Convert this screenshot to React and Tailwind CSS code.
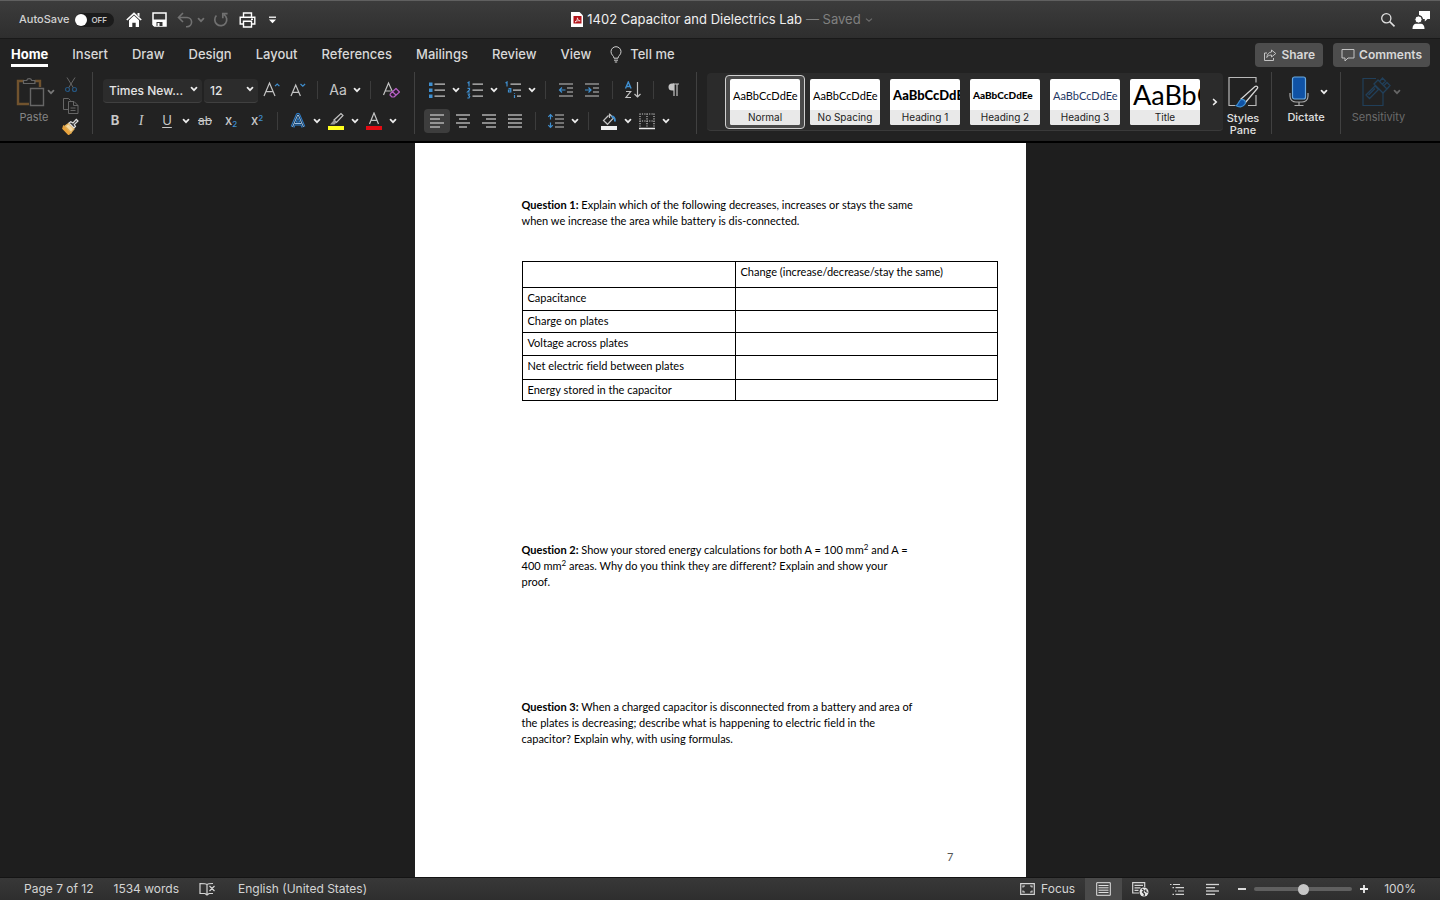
import React, { useState } from 'react';

const tabs = ['Home', 'Insert', 'Draw', 'Design', 'Layout', 'References', 'Mailings', 'Review', 'View'];

const styles = [
  { name: 'Normal', sample: 'AaBbCcDdEe', look: 'pt-0.5 text-[11px] text-black' },
  { name: 'No Spacing', sample: 'AaBbCcDdEe', look: 'pt-0.5 text-[11px] text-black' },
  { name: 'Heading 1', sample: 'AaBbCcDdE', look: 'pt-0.5 text-[13px] font-black text-black' },
  { name: 'Heading 2', sample: 'AaBbCcDdEe', look: 'pt-0.5 text-[10px] font-black text-black' },
  { name: 'Heading 3', sample: 'AaBbCcDdEe', look: 'pt-0.5 text-[11px] text-[#1f3864]' },
  { name: 'Title', sample: 'AaBbC', look: 'text-[27px] text-black' },
];

const rows = [
  { label: 'Capacitance', height: 'h-[23px]' },
  { label: 'Charge on plates', height: 'h-[22px]' },
  { label: 'Voltage across plates', height: 'h-[23px]' },
  { label: 'Net electric field between plates', height: 'h-6' },
  { label: 'Energy stored in the capacitor', height: 'h-[21px]' },
];

const Svg = ({ w = 20, h = 20, children, className = '' }) => (
  <svg width={w} height={h} viewBox={`0 0 ${w} ${h}`} fill="none" stroke="#c4c4c4" strokeWidth="1.2" className={`shrink-0 ${className}`} aria-hidden="true">
    {children}
  </svg>
);

const Chevron = ({ color = '#ececec', className = '' }) => (
  <Svg w={8} h={8} className={className}>
    <path d="M1.5 2.6 4 5.2 6.5 2.6" stroke={color} strokeWidth="1.7" strokeLinecap="round" />
  </Svg>
);

const Tool = ({ label, active, children }) => (
  <button aria-label={label} className={`flex h-6 w-[26px] items-center justify-center ${active ? 'rounded bg-[#3d3d3d]' : ''}`}>
    {children}
  </button>
);

const More = ({ label }) => (
  <button aria-label={`${label} options`} className="flex h-6 w-3 items-center justify-center">
    <Chevron />
  </button>
);

const Sep = () => (
  <div className="flex w-[15px] justify-center">
    <div className="h-[18px] w-px bg-[#3c3c3c]" />
  </div>
);

const Divider = () => <div className="mt-0.5 h-[62px] w-px shrink-0 bg-[#414141]" />;

const Lines = ({ items, w = 16, h = 16, color = '#c4c4c4' }) => (
  <Svg w={w} h={h}>
    {items.map(([x1, x2, y]) => (
      <path key={`${x1}-${y}`} d={`M${x1} ${y}H${x2}`} stroke={color} strokeWidth="1.3" />
    ))}
  </Svg>
);

const TitleBar = () => {
  const [autoSave, setAutoSave] = useState(false);

  return (
    <header className="grid h-[39px] shrink-0 grid-cols-[1fr_auto_1fr] items-center border-t border-b border-t-[#606060] border-b-[#191919] bg-linear-to-b from-[#3c3c3c] to-[#2e2e2e]">
      <div className="flex items-center pl-[19px]">
        <label className="flex items-center gap-1.5 text-[11px] font-medium text-[#d2d2d2]">
          AutoSave
          <input type="checkbox" className="sr-only" checked={autoSave} onChange={(e) => setAutoSave(e.target.checked)} />
          <span className="flex h-3.5 w-[39px] items-center rounded-full bg-[#1b1b1b] text-[8px] font-semibold text-[#c8c8c8]">
            <span className="mr-1 size-3 rounded-full bg-white" />
            OFF
          </span>
        </label>
        <div className="ml-3 flex items-center">
          <button aria-label="Home" className="mr-2.5">
            <Svg w={16} h={16}>
              <path d="M.8 8 8 1.3 15.2 8" stroke="#fff" strokeWidth="1.7" />
              <path d="M11.5 1h2v4l-2-2Z" fill="#fff" stroke="none" />
              <path d="M3 8.2 8 3.6l5 4.6V15H9.7v-4.2H6.3V15H3Z" fill="#fff" stroke="none" />
            </Svg>
          </button>
          <button aria-label="Save" className="mr-2.5">
            <Svg w={15} h={15}>
              <path d="M1 1h13v13H2.500L1 12.500Z" stroke="#fff" strokeWidth="1.5" />
              <path d="M1 7.5h13V14H1Z" fill="#fff" stroke="none" />
              <path d="M4.5 10h6v4h-6Z" fill="#333" stroke="none" />
              <path d="M5.5 11h2v3h-2Z" fill="#fff" stroke="none" />
            </Svg>
          </button>
          <button aria-label="Undo">
            <Svg w={16} h={16}>
              <path d="M6 1 1.5 5.5 6 10M1.8 5.5H10a4.6 4.6 0 0 1 0 9.2H9" stroke="#717171" strokeWidth="1.6" />
            </Svg>
          </button>
          <button aria-label="Undo options" className="mr-2 ml-1">
            <Chevron color="#717171" />
          </button>
          <button aria-label="Repeat" className="mr-2.5">
            <Svg w={16} h={16}>
              <path d="M3.4 3.5A6 6 0 1 0 11 2.6M9.8 6.2V1.6h4.8" stroke="#717171" strokeWidth="1.7" />
            </Svg>
          </button>
          <button aria-label="Print" className="mr-3">
            <Svg w={17} h={16}>
              <path d="M4.5 5V1h8v4M4 12H1.2V5.2h14.6V12H13M4.5 9.2h8V15h-8ZM12 7.2h2" stroke="#fff" strokeWidth="1.4" />
            </Svg>
          </button>
          <button aria-label="Customize toolbar">
            <Svg w={9} h={8}>
              <path d="M1 1.2h7" stroke="#fff" strokeWidth="1.3" />
              <path d="M1 3.4h7L4.5 7.2Z" fill="#fff" stroke="none" />
            </Svg>
          </button>
        </div>
      </div>

      <div className="flex items-center pl-1 text-[13px] text-[#efefef]">
        <Svg w={12} h={15} className="mr-1">
          <path d="M0 0h8.5L12 3.5V15H0Z" fill="#fff" stroke="none" />
          <path d="M2.5 4h8v7.5h-8Z" fill="#b3151b" stroke="none" />
          <path d="M4 10c1.5-.6 2.6-2.6 2.4-4.2.3 2 1.4 3 2.8 3-1.6-.3-3.4.1-5.2 1.2Z" stroke="#fff" strokeWidth=".7" />
        </Svg>
        <h1>1402 Capacitor and Dielectrics Lab</h1>
        <button className="ml-1 flex items-center gap-1 text-[#808080]">
          — Saved
          <Svg w={8} h={8}>
            <path d="M1 2.6 4 5.2 7 2.6" stroke="#6c6c6c" />
          </Svg>
        </button>
      </div>

      <div className="flex items-center justify-end gap-4 pr-2.5">
        <button aria-label="Search">
          <Svg w={16} h={16}>
            <circle cx="6.3" cy="6.3" r="4.6" stroke="#e0e0e0" strokeWidth="1.3" />
            <path d="m9.7 9.7 4.8 4.6" stroke="#e0e0e0" strokeWidth="1.6" />
          </Svg>
        </button>
        <button aria-label="Account">
          <Svg w={18} h={20}>
            <path d="M7 1h11v8h-2.5l-2.7 2.6V9H11a5 5 0 0 0-4-4Z" fill="#fff" stroke="none" />
            <circle cx="6.5" cy="9.5" r="3.6" fill="#fff" stroke="#363636" strokeWidth="1" />
            <path d="M.5 19c0-4 2-5.3 3.8-5.3h4.4c1.800 0 3.800 1.300 3.800 5.300Z" fill="#fff" stroke="none" />
          </Svg>
        </button>
      </div>
    </header>
  );
};

const TabRow = () => (
  <nav className="flex h-[31px] shrink-0 items-center pr-2.5 pl-[11px] text-[13px] font-medium text-[#d8d8d8]">
    <div className="flex gap-6">
      {tabs.map((tab) => (
        <button key={tab} className={tab === 'Home' ? 'border-b-3 border-white pt-[3px] font-bold text-white' : ''}>
          {tab}
        </button>
      ))}
    </div>
    <button className="ml-[19px] flex items-center gap-2">
      <Svg w={12} h={17}>
        <path d="M4 12.2C4 9.800 1 9 1 5.700a5 5 0 0 1 10 0C11 9 8 9.800 8 12.200ZM4 14.200h4M4.800 16h2.400" stroke="#d0d0d0" strokeWidth="1" />
      </Svg>
      Tell me
    </button>
    <div className="ml-auto flex gap-2.5 text-xs font-semibold">
      <button className="flex h-6 items-center gap-1 rounded bg-[#4d4d4d] px-2">
        <Svg w={14} h={14}>
          <path d="M4 5H1.500v7.500h9V10M8.500 2l4.300 3.500-4.300 3.500V7C6 7 4.600 8 3.800 9.500 4.200 6.200 5.800 4.200 8.500 4Z" strokeWidth="1" />
        </Svg>
        Share
      </button>
      <button className="flex h-6 items-center gap-1 rounded bg-[#4d4d4d] px-2">
        <Svg w={14} h={14}>
          <path d="M1 1.500h12v8.500H7L4 13v-3H1Z" strokeWidth="1" />
        </Svg>
        Comments
      </button>
    </div>
  </nav>
);

const ClipboardGroup = () => (
  <div className="flex w-[92px] shrink-0">
    <div className="flex w-[60px] flex-col gap-0.5 pt-1.5 pl-4">
      <div className="flex items-center gap-0.5">
        <button id="paste" aria-label="Paste" className="shrink-0">
          <Svg w={29} h={32}>
            <path d="M8 5H2v23h11M19 5h5v6" stroke="#71532e" strokeWidth="2.400" />
            <path d="M7.500 7.500V4.500h3.200a2.600 2.600 0 0 1 5 0h3.200v3Z" stroke="#666" />
            <path d="M14.500 12.500h13v17h-13Z" fill="#222" stroke="#666" strokeWidth="1.400" />
          </Svg>
        </button>
        <Chevron color="#777" />
      </div>
      <label htmlFor="paste" className="-ml-2 w-[52px] text-center text-[11px] leading-3.5 text-[#858585]">Paste</label>
    </div>
    <div className="flex flex-col items-center justify-start gap-1 pt-1.5 pl-0.5">
      <button aria-label="Cut">
        <Svg w={16} h={17}>
          <path d="M4 1.500 10.500 12M12 1.500 5.500 12" stroke="#666" strokeWidth="1" />
          <circle cx="4.500" cy="13.500" r="2" stroke="#25557f" />
          <circle cx="11.500" cy="13.500" r="2" stroke="#25557f" />
        </Svg>
      </button>
      <button aria-label="Copy">
        <Svg w={17} h={17}>
          <path d="M6 12.500H1.500v-11h5l2 2M6.500 4.500H12l4 4v8H6.500ZM11.500 4.500v4H16M8.500 11h5M8.500 13.500h5" stroke="#666" strokeWidth="1" />
        </Svg>
      </button>
      <button aria-label="Format painter">
        <Svg w={17} h={17}>
          <path d="m1.500 8 7.500 7-2.500 1.500L.8 10.500Z" fill="#e8a33d" stroke="#e8a33d" />
          <path d="M3 8 6.500 5.500 12 11 9 14.500Z" fill="#f4d9a4" stroke="#e4b25c" />
          <path d="m7 5 5 5 1.500-1.500-1.200-2L16 3l-1.700-1.700L11 5 8.800 3.800Z" fill="#333" stroke="#ddd" />
        </Svg>
      </button>
    </div>
  </div>
);

const FontGroup = () => (
  <div className="flex w-[321px] shrink-0 flex-col gap-[7px] pt-2 pl-[9px] text-[#c8c8c8]">
    <div className="flex h-6 items-center">
      <div className="relative mr-0.5 ml-px">
        <select aria-label="Font" className="h-6 w-[99px] appearance-none rounded-sm border-b border-[#404040] bg-[#2c2c2c] pl-1.5 text-xs font-medium text-[#e4e4e4]">
          <option>Times New...</option>
        </select>
        <Chevron className="pointer-events-none absolute top-2 right-1" />
      </div>
      <div className="relative">
        <select aria-label="Font size" className="h-6 w-[54px] appearance-none rounded-sm border-b border-[#404040] bg-[#2c2c2c] pl-1.5 text-xs font-medium text-[#e4e4e4]">
          <option>12</option>
        </select>
        <Chevron className="pointer-events-none absolute top-2 right-1" />
      </div>
      <Tool label="Increase font size">
        <Svg w={18} h={18}>
          <path d="M2 15 7.500 2 13 15M4 10.700h7" />
          <path d="m13 5.200 2.200-2.200 2.200 2.200" stroke="#3f8fd0" />
        </Svg>
      </Tool>
      <Tool label="Decrease font size">
        <Svg w={18} h={18}>
          <path d="M3 15 7.700 4 12.400 15M4.700 11.300h6" />
          <path d="M12.500 3 14.800 5.200 17.100 3" stroke="#3f8fd0" />
        </Svg>
      </Tool>
      <Sep />
      <Tool label="Change case"><span className="text-sm">Aa</span></Tool>
      <More label="Change case" />
      <Sep />
      <Tool label="Clear formatting">
        <Svg w={18} h={18}>
          <path d="M1.500 14 6.500 2 11 12M3.300 10h5.500" />
          <path d="m8.500 12.500 5.500-5 3.500 3.500-5.500 5H10L8 14ZM10.500 10.700l3.700 3.600" fill="#2a1d2d" stroke="#b65fc4" strokeLinejoin="round" />
        </Svg>
      </Tool>
    </div>
    <div className="flex h-6 items-center text-[13px]">
      <Tool label="Bold"><span className="font-bold">B</span></Tool>
      <Tool label="Italic"><span className="font-[Liberation_Serif] text-sm italic">I</span></Tool>
      <Tool label="Underline"><span className="underline underline-offset-2">U</span></Tool>
      <More label="Underline" />
      <Tool label="Strikethrough"><span className="text-xs line-through">ab</span></Tool>
      <Tool label="Subscript"><span className="font-medium">x<sub className="text-[8px] text-[#3f8fd0]">2</sub></span></Tool>
      <Tool label="Superscript"><span className="font-medium">x<sup className="text-[8px] text-[#3f8fd0]">2</sup></span></Tool>
      <Sep />
      <Tool label="Text effects">
        <Svg w={18} h={18}>
          <path d="M3.500 15 8.700 3h.6l5.200 12M5.500 11.500h7" stroke="#2f80cf" strokeWidth="4" strokeLinejoin="round" />
          <path d="M3.500 15 8.700 3h.6l5.200 12M5.500 11.500h7" stroke="#16293b" strokeWidth="2" />
          <path d="M3.500 15 8.700 3h.6l5.200 12M5.500 11.500h7" stroke="#a8cdf0" strokeWidth=".9" />
        </Svg>
      </Tool>
      <More label="Text effects" />
      <Tool label="Highlight color">
        <Svg w={18} h={18}>
          <path d="M1 14h16v4H1Z" fill="#ffff1e" stroke="none" />
          <path d="m7 8 7-6.500 2 2L9.500 10.500Z" />
          <path d="M7 8 3 12.500h4.500l2-2Z" fill="#999" stroke="none" />
        </Svg>
      </Tool>
      <More label="Highlight color" />
      <Tool label="Font color">
        <Svg w={18} h={18}>
          <path d="M1 14h16v4H1Z" fill="#e30b13" stroke="none" />
          <path d="M4.500 12 9 1l4.500 11M6 8.300h6" />
        </Svg>
      </Tool>
      <More label="Font color" />
    </div>
  </div>
);

const ParagraphGroup = () => (
  <div className="flex w-[281px] shrink-0 flex-col gap-[7px] pt-2 pl-[9px]">
    <div className="flex h-6 items-center">
      <Tool label="Bullets">
        <Svg w={18} h={18}>
          <path d="M1 1.500h3.500V5H1ZM1 7.500h3.500V11H1ZM1 13.500h3.500V17H1Z" fill="#3f8fd0" stroke="none" />
          <path d="M6.500 3.200H17M6.500 9.200H17M6.500 15.200H17" />
        </Svg>
      </Tool>
      <More label="Bullets" />
      <Tool label="Numbering">
        <Svg w={18} h={18}>
          <path d="M1.500 2 3 1v4.500M1.500 7.300h2v1.500L1.500 11h2.300M1.500 13h2l-.8 1.600 1 .9-.7 1.500H1.300" stroke="#3f8fd0" />
          <path d="M6.500 3.200H17M6.500 9.200H17M6.500 15.200H17" />
        </Svg>
      </Tool>
      <More label="Numbering" />
      <Tool label="Multilevel list">
        <Svg w={18} h={18}>
          <path d="M1.500 2 3 1v4.500M4.500 7.500h2.300V11H4.500V9h2.300M10.500 12v.8M10.500 14v3" stroke="#3f8fd0" />
          <path d="M6.500 3.200H17M9 9.200h8M13 15.200h4" />
        </Svg>
      </Tool>
      <More label="Multilevel list" />
      <Sep />
      <Tool label="Decrease indent">
        <Svg w={16} h={16}>
          <path d="M1 2h14M9 6h6M9 10h6M1 14h14" />
          <path d="M7.500 8H1.500M4 5.500 1.500 8 4 10.500" stroke="#3f8fd0" />
        </Svg>
      </Tool>
      <Tool label="Increase indent">
        <Svg w={16} h={16}>
          <path d="M1 2h14M9 6h6M9 10h6M1 14h14" />
          <path d="M1 8h6M4.500 5.500 7 8 4.500 10.500" stroke="#3f8fd0" />
        </Svg>
      </Tool>
      <Sep />
      <Tool label="Sort">
        <Svg w={18} h={18}>
          <path d="M1.500 7.500 4.300 1l2.800 6.500M2.500 5.500h3.600" stroke="#3f8fd0" strokeWidth="1.400" />
          <path d="M2 10.500h4.700L2 16.500h5M13.500 1v15M10.500 13l3 3 3-3" />
        </Svg>
      </Tool>
      <Sep />
      <Tool label="Show formatting marks">
        <Svg w={14} h={16}>
          <path d="M6 2h6M7 2v12M10 2v12" strokeWidth="1.200" />
          <path d="M7 1.500H5a3.500 3.500 0 0 0 0 7h2Z" fill="#c4c4c4" stroke="none" />
        </Svg>
      </Tool>
    </div>
    <div className="flex h-6 items-center">
      <Tool label="Align left" active><Lines items={[[1, 15, 2], [1, 11, 6], [1, 15, 10], [1, 11, 14]]} /></Tool>
      <Tool label="Align center"><Lines items={[[1, 15, 2], [4, 12, 6], [1, 15, 10], [4, 12, 14]]} /></Tool>
      <Tool label="Align right"><Lines items={[[1, 15, 2], [5, 15, 6], [1, 15, 10], [5, 15, 14]]} /></Tool>
      <Tool label="Justify"><Lines items={[[1, 15, 2], [1, 15, 6], [1, 15, 10], [1, 15, 14]]} /></Tool>
      <Sep />
      <Tool label="Line spacing">
        <Svg w={18} h={16}>
          <path d="M8 2h9M8 6h9M8 10h9M8 14h9" />
          <path d="M3.500 1.500v5M1.300 3.800l2.200-2.300 2.200 2.300M3.500 9.500v5M1.300 12.200l2.200 2.300 2.200-2.300" stroke="#3f8fd0" />
        </Svg>
      </Tool>
      <More label="Line spacing" />
      <Sep />
      <Tool label="Shading">
        <Svg w={18} h={18}>
          <path d="M1 14h16v4H1Z" fill="#f0f0f0" stroke="none" />
          <path d="m8.500 3.500-5 5 4 3.800 6-6.300-4-4M9.500 6V1.500" />
          <path d="M11.500 4.500c2.500 0 3.500 2 3.500 5" stroke="#3f8fd0" strokeWidth="1.800" />
        </Svg>
      </Tool>
      <More label="Shading" />
      <Tool label="Borders">
        <Svg w={18} h={18}>
          <path d="M1.500 2h15M1.500 9h15M2 1.500v13M9 1.500v13M16 1.500v13" strokeDasharray="1.200 1.200" />
          <path d="M1 16.500h16" strokeWidth="1.500" stroke="#eee" />
        </Svg>
      </Tool>
      <More label="Borders" />
    </div>
  </div>
);

const StylesGallery = () => (
  <div className="mt-[3px] ml-2.5 flex h-[58px] min-w-0 flex-1 items-center rounded border-b border-[#3a3a3a] bg-[#2b2b2b] pl-[18px]">
    <div className="flex min-w-0 flex-1 overflow-hidden">
      {styles.map((style, i) => (
        <button key={style.name} className={`h-[54px] w-20 shrink-0 rounded border px-1 py-[3px] ${i === 0 ? 'border-[#d0d0d0] bg-[#4a4a4a]' : 'border-transparent'}`}>
          <span className="flex h-full flex-col overflow-hidden rounded-xs bg-white">
            <span className={`flex h-[31px] shrink-0 items-center pl-[3px] font-[Lato] leading-none whitespace-nowrap ${style.look}`}>{style.sample}</span>
            <span className="flex flex-1 items-center justify-center bg-[#e9e9e9] text-[10px] leading-3 text-[#222]">{style.name}</span>
          </span>
        </button>
      ))}
    </div>
    <button aria-label="More styles" className="flex h-full w-4 items-center justify-center">
      <Chevron className="-rotate-90" />
    </button>
  </div>
);

const Ribbon = () => (
  <section className="flex h-[73px] shrink-0 border-b-2 border-black">
    <ClipboardGroup />
    <Divider />
    <FontGroup />
    <Divider />
    <ParagraphGroup />
    <Divider />
    <StylesGallery />
    <button className="flex w-12 shrink-0 flex-col items-center gap-1 pt-1.5 pr-2 text-[11px] leading-3 font-medium text-[#e0e0e0]">
      <Svg w={32} h={32}>
        <path d="M8 29.500H2v-28h27v5M29 19v10.500h-8" stroke="#b8b8b8" />
        <path d="M14 23 28 10.500c1.500-1.200 3.500.5 2.300 2L18 27Z" fill="#222" stroke="#d8d8d8" />
        <path d="M9 29.500c3-1 2-5 6-6.200 3 .2 4 2.500 3 4.700-2 3.500-6.500 3.500-9 1.500Z" fill="#0f52a5" stroke="#3f8fd0" />
      </Svg>
      <span>Styles<br />Pane</span>
    </button>
    <Divider />
    <div className="flex w-[68px] shrink-0 flex-col pt-1.5">
      <div className="flex items-center pl-4">
        <button id="dictate" aria-label="Dictate" className="shrink-0">
          <Svg w={22} h={31}>
            <path d="M2 17v3c0 4 3 6 6 6h6c3 0 6-2 6-6v-3M11 26v3.500M6.500 29.500h9" stroke="#aaa" />
            <rect x="4.500" y="1" width="13" height="22" rx="2" fill="#0f52a5" stroke="#6aa9e0" />
          </Svg>
        </button>
        <Chevron className="ml-2.5" />
      </div>
      <label htmlFor="dictate" className="mt-1 text-center text-[11px] leading-3 font-medium text-[#e0e0e0]">Dictate</label>
    </div>
    <Divider />
    <div className="flex w-[99px] shrink-0 flex-col pt-1.5 pr-6">
      <div className="flex items-center pl-5">
        <button id="sensitivity" aria-label="Sensitivity" className="shrink-0">
          <Svg w={30} h={31}>
            <path d="M15 2.500H2v27h20V17" stroke="#213f59" strokeWidth="1.200" />
            <path d="m6 18 9-9 3.500 3.500-9 9ZM8.500 18l6.500-6.500M14 7l4-4 9 9-4 4ZM19.500 4.500l3-3.500 3 3-3 3M24 8.500l3-3 3 3-3 3.500" transform="translate(-1 1)" stroke="#213f59" strokeWidth="1.300" />
          </Svg>
        </button>
        <Chevron color="#666" className="ml-0.5" />
      </div>
      <label htmlFor="sensitivity" className="mt-1 text-center text-[11px] leading-3 text-[#6b6b6b]">Sensitivity</label>
    </div>
  </section>
);

const Squared = () => <sup className="text-[8px] leading-none">2</sup>;

const DocumentPage = () => (
  <article className="mx-auto flex min-h-full w-[611px] flex-col bg-white pt-[54px] pb-3 pl-[107px] font-[Lato] text-[11px] leading-4 text-black [font-variant-ligatures:none]">
    <p>
      <b>Question 1:</b> Explain which of the following decreases, increases or stays the same<br />
      when we increase the area while battery is dis-connected.
    </p>
    <table className="mt-8 w-[476px] table-fixed border-collapse">
      <thead>
        <tr className="h-[26px]">
          <td className="w-[213px] border border-black" />
          <th scope="col" className="border border-black px-[5px] pt-0.5 text-left align-top font-normal">Change (increase/decrease/stay the same)</th>
        </tr>
      </thead>
      <tbody>
        {rows.map((row) => (
          <tr key={row.label} className={row.height}>
            <th scope="row" className="border border-black px-[5px] pt-0.5 text-left align-top font-normal">{row.label}</th>
            <td className="border border-black" />
          </tr>
        ))}
      </tbody>
    </table>
    <p className="mt-[141px]">
      <b>Question 2:</b> Show your stored energy calculations for both A = 100 mm<Squared /> and A =<br />
      400 mm<Squared /> areas. Why do you think they are different? Explain and show your<br />
      proof.
    </p>
    <p className="mt-[109px]">
      <b>Question 3:</b> When a charged capacitor is disconnected from a battery and area of<br />
      the plates is decreasing; describe what is happening to electric field in the<br />
      capacitor? Explain why, with using formulas.
    </p>
    <footer className="mt-auto w-[432px] text-right text-[#555]">7</footer>
  </article>
);

const StatusBar = () => {
  const [zoom, setZoom] = useState(100);

  return (
    <footer className="flex h-[23px] shrink-0 items-center border-t border-[#141414] bg-linear-to-b from-[#383838] to-[#2e2e2e] pr-6 pl-6 text-xs text-[#d4d4d4]">
      <button>Page 7 of 12</button>
      <button className="ml-5">1534 words</button>
      <button aria-label="Proofing" className="ml-5">
        <Svg w={17} h={14}>
          <path d="M8 2v11M8 2.500C7 1.500 5 1.500 1 1.500v10h5l2 1.500 2-1.500h4M8 2.500c1-1 2-1 6-1M10.500 4l5 5M15.500 4l-5 5" stroke="#d4d4d4" />
        </Svg>
      </button>
      <button className="ml-[22px]">English (United States)</button>

      <button className="ml-auto flex items-center gap-1.5">
        <Svg w={15} h={12}>
          <path d="M.7.700h13.600v10.600H.7Z" stroke="#d4d4d4" />
          <path d="M3 4.500V3h2M10 3h2v1.500M12 7.500V9h-2M5 9H3V7.500" stroke="#d4d4d4" />
        </Svg>
        Focus
      </button>
      <button aria-label="Print layout" className="ml-2.5 flex h-[22px] w-[37px] items-center justify-center bg-[#4a4a4a]">
        <Svg w={15} h={14}>
          <path d="M.7.700h13.600v12.600H.7ZM2.500 3.500h10M2.500 5.800h10M2.500 8.200h10M2.500 10.500h10" stroke="#e0e0e0" strokeWidth="1" />
        </Svg>
      </button>
      <button aria-label="Web layout" className="ml-2.5">
        <Svg w={17} h={15}>
          <path d="M7 11H.7V.700h12V5M2.500 3.300h8.500M2.500 5.800h6M2.500 8.300h4" stroke="#d4d4d4" />
          <circle cx="12" cy="10" r="4.500" fill="#e8e8e8" stroke="none" />
          <path d="m10 7 2 1.500-1.500 1.500 2 2-.500 2M14 7.500l-.500 2 2 1" stroke="#333" />
        </Svg>
      </button>
      <button aria-label="Outline" className="ml-5">
        <Svg w={16} h={13}>
          <path d="M1 1.500h1.500M4 1.500h7M3.500 4.700H5M6.500 4.700H15M6 8h1.500M9 8h6M3.500 11.300H5M6.500 11.300H15" stroke="#d4d4d4" />
        </Svg>
      </button>
      <button aria-label="Draft" className="ml-5">
        <Lines w={15} h={13} color="#d4d4d4" items={[[1, 14, 1.5], [1, 10, 4.7], [1, 14, 8], [1, 10, 11.3]]} />
      </button>
      <button aria-label="Zoom out" className="ml-[18px]">
        <Svg w={8} h={8}>
          <path d="M0 4h8" stroke="#eee" strokeWidth="1.800" />
        </Svg>
      </button>
      <input
        type="range"
        aria-label="Zoom"
        min="0"
        max="200"
        value={zoom}
        onChange={(e) => setZoom(Number(e.target.value))}
        className="mx-2 h-1 w-[98px] appearance-none rounded-full bg-[#606060] [&::-webkit-slider-thumb]:size-[11px] [&::-webkit-slider-thumb]:appearance-none [&::-webkit-slider-thumb]:rounded-full [&::-webkit-slider-thumb]:bg-[#c6c6c6]"
      />
      <button aria-label="Zoom in">
        <Svg w={8} h={8}>
          <path d="M0 4h8M4 0v8" stroke="#eee" strokeWidth="1.800" />
        </Svg>
      </button>
      <span className="ml-4">{zoom}%</span>
    </footer>
  );
};

const App = () => (
  <div className="flex h-screen flex-col bg-[#222] font-[Inter,sans-serif]">
    <TitleBar />
    <TabRow />
    <Ribbon />
    <main className="min-h-0 flex-1 overflow-hidden bg-[#1e1e1e]">
      <DocumentPage />
    </main>
    <StatusBar />
  </div>
);

export default App;
